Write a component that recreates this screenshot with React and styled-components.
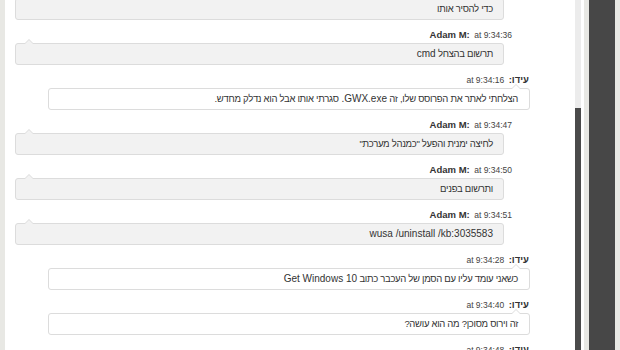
import React from "react";
import styled, { createGlobalStyle, css } from "styled-components";

const Global = createGlobalStyle`
  html, body { margin: 0; padding: 0; background: #fff; }
  body { font-family: "Liberation Sans", Arial, sans-serif; overflow: hidden; }
`;

const Page = styled.div`
  display: flex;
  width: 620px;
  height: 350px;
  overflow: hidden;
  background: #fff;
`;

const EdgeStrip = styled.div`
  width: 5px;
  flex: none;
  background: #e8e8e4;
`;

const ChatPane = styled.div`
  flex: 1;
  min-width: 0;
  overflow: hidden;
`;

const MessageList = styled.div`
  display: flex;
  flex-direction: column;
  margin-top: -19px;
`;

const Scrollbar = styled.div`
  width: 6px;
  flex: none;
  display: flex;
  flex-direction: column;
  background: #ececec;
`;

const Thumb = styled.div`
  margin-top: 108px;
  flex: 1;
  background: #4a4a4a;
`;

const Spacer = styled.div`
  width: 3px;
  flex: none;
  background: #fff;
`;

const SidePanel = styled.div`
  width: 26px;
  flex: none;
  background: #474747;
  border-left: 5px solid #e8e8e4;
  border-right: 5px solid #e8e8e4;
`;

const MessageBlock = styled.div`
  direction: rtl;
  display: flex;
  flex-direction: column;
  margin-bottom: 6px;
`;

const Header = styled.div`
  height: 13px;
  line-height: 13px;
  text-align: right;
  white-space: nowrap;
  padding-right: ${(p) => (p.$own ? "46px" : "63px")};
  margin-bottom: 4px;
  color: #333;
`;

const Name = styled.b`
  font-size: 9.5px;
  font-weight: bold;
  color: #333;
`;

const Time = styled.span`
  font-size: 8.5px;
  color: #444;
`;

const Heb = styled.span`
  font-size: 9.5px;
  letter-spacing: -0.3px;
`;

const Bubble = styled.div`
  position: relative;
  box-sizing: border-box;
  height: 22px;
  line-height: 20px;
  font-size: 10px;
  color: #333;
  text-align: right;
  white-space: nowrap;
  padding: 0 10px;
  border: 1px solid #dcdcdc;
  border-radius: 3px;
  ${(p) =>
    p.$own
      ? css`
          background: #fff;
          margin-left: 43px;
          margin-right: 45px;
          padding-right: 11px;
        `
      : css`
          background: #f2f2f2;
          margin-left: 10px;
          margin-right: 71px;
        `}

  &::before,
  &::after {
    content: "";
    position: absolute;
    width: 0;
    height: 0;
    border-style: solid;
    ${(p) => (p.$own ? "right: 9px;" : "left: 9px;")}
  }
  &::before {
    top: -5px;
    border-width: 0 4px 4px 4px;
    border-color: transparent transparent #dcdcdc transparent;
  }
  &::after {
    top: -4px;
    border-width: 0 4px 4px 4px;
    border-color: transparent transparent ${(p) => (p.$own ? "#fff" : "#f2f2f2")} transparent;
  }
`;

const HEB_RUN = /([\u0590-\u05FF][\u0590-\u05FF\s,.?"':]*)/g;

function MixedText({ text }) {
  const parts = text.split(HEB_RUN).filter((s) => s !== "");
  return parts.map((part, i) =>
    /[\u0590-\u05FF]/.test(part) ? <Heb key={i}>{part}</Heb> : <React.Fragment key={i}>{part}</React.Fragment>
  );
}

const messages = [
  { own: false, name: "Adam M:", time: "at 9:34:33", text: "כדי להסיר אותו" },
  { own: false, name: "Adam M:", time: "at 9:34:36", text: "תרשום בהצחל cmd" },
  {
    own: true,
    name: "עידו:",
    time: "at 9:34:16",
    text: "הצלחתי לאתר את הפרוסס שלו, זה GWX.exe. סגרתי אותו אבל הוא נדלק מחדש.",
  },
  { own: false, name: "Adam M:", time: "at 9:34:47", text: 'לחיצה ימנית והפעל "כמנהל מערכת"' },
  { own: false, name: "Adam M:", time: "at 9:34:50", text: "ותרשום בפנים" },
  { own: false, name: "Adam M:", time: "at 9:34:51", text: "wusa /uninstall /kb:3035583" },
  {
    own: true,
    name: "עידו:",
    time: "at 9:34:28",
    text: "כשאני עומד עליו עם הסמן של העכבר כתוב Get Windows 10",
  },
  { own: true, name: "עידו:", time: "at 9:34:40", text: "זה וירוס מסוכן? מה הוא עושה?" },
  { own: true, name: "עידו:", time: "at 9:34:48", text: "" },
];

export default function App() {
  return (
    <>
      <Global />
      <Page>
        <EdgeStrip />
        <ChatPane>
          <MessageList>
            {messages.map((m, i) => (
              <MessageBlock key={i}>
                <Header $own={m.own}>
                  <Name>{m.name}</Name> <Time>{m.time}</Time>
                </Header>
                <Bubble $own={m.own}>
                  <MixedText text={m.text} />
                </Bubble>
              </MessageBlock>
            ))}
          </MessageList>
        </ChatPane>
        <Scrollbar>
          <Thumb />
        </Scrollbar>
        <Spacer />
        <SidePanel />
      </Page>
    </>
  );
}
